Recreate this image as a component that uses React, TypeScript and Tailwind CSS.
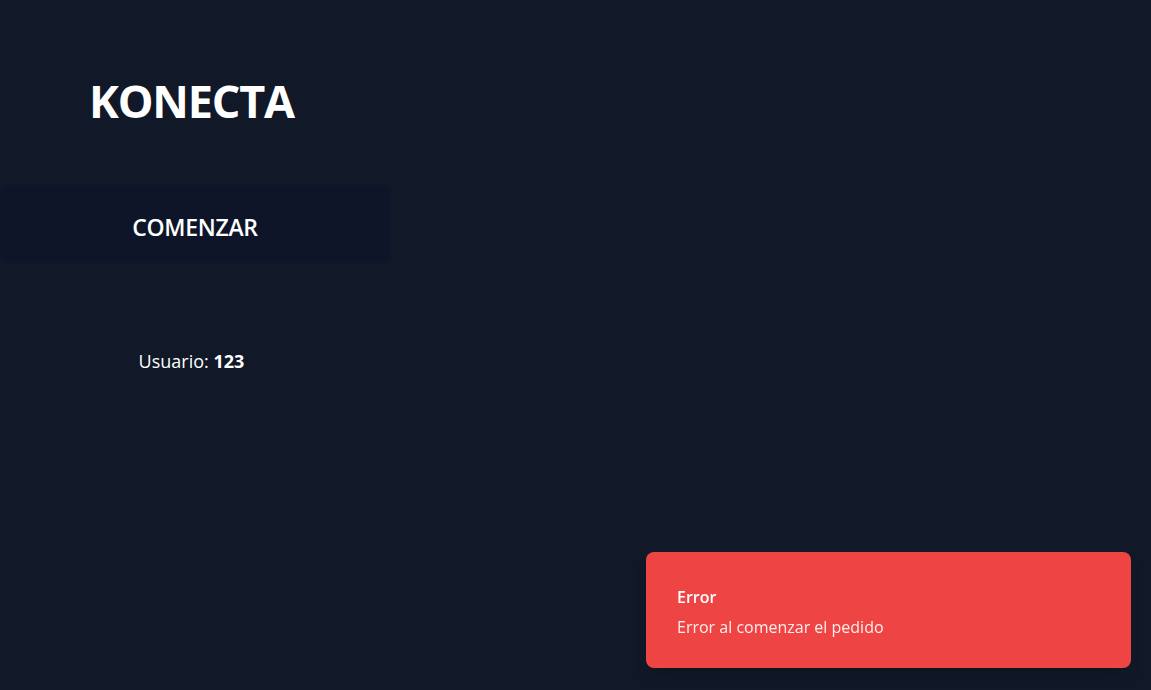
import React from "react";

function Toast({ title, description }: { title: string; description: string }) {
  return (
    <div className="fixed bottom-[22px] right-[20px] w-[485px] rounded-lg bg-[#ef4444] px-[31px] pt-[34px] pb-[30px] shadow-lg">
      <div className="text-[16px] font-semibold leading-[22px] text-white">{title}</div>
      <div className="mt-[8px] text-[16px] leading-[22px] text-white/90">{description}</div>
    </div>
  );
}

export default function App() {
  return (
    <div
      className="relative h-[690px] w-full overflow-hidden bg-[#111827] text-white"
      style={{ fontFamily: '"Open Sans", "Noto Sans", sans-serif' }}
    >
      <div className="flex w-[383px] flex-col items-center">
        <h1 className="mt-[77px] text-[45px] font-bold leading-[48px] tracking-[-1.2px]">KONECTA</h1>
        <button
          type="button"
          className="mt-[60px] flex h-[78px] w-[390px] items-center justify-center self-start rounded-lg bg-[#0e1529] pt-[6px] text-[23px] font-semibold tracking-[-0.3px] text-white"
        >
          COMENZAR
        </button>
        <p className="mt-[84px] text-[18px] leading-[28px]">
          Usuario: <span className="font-bold">123</span>
        </p>
      </div>
      <Toast title="Error" description="Error al comenzar el pedido" />
    </div>
  );
}
